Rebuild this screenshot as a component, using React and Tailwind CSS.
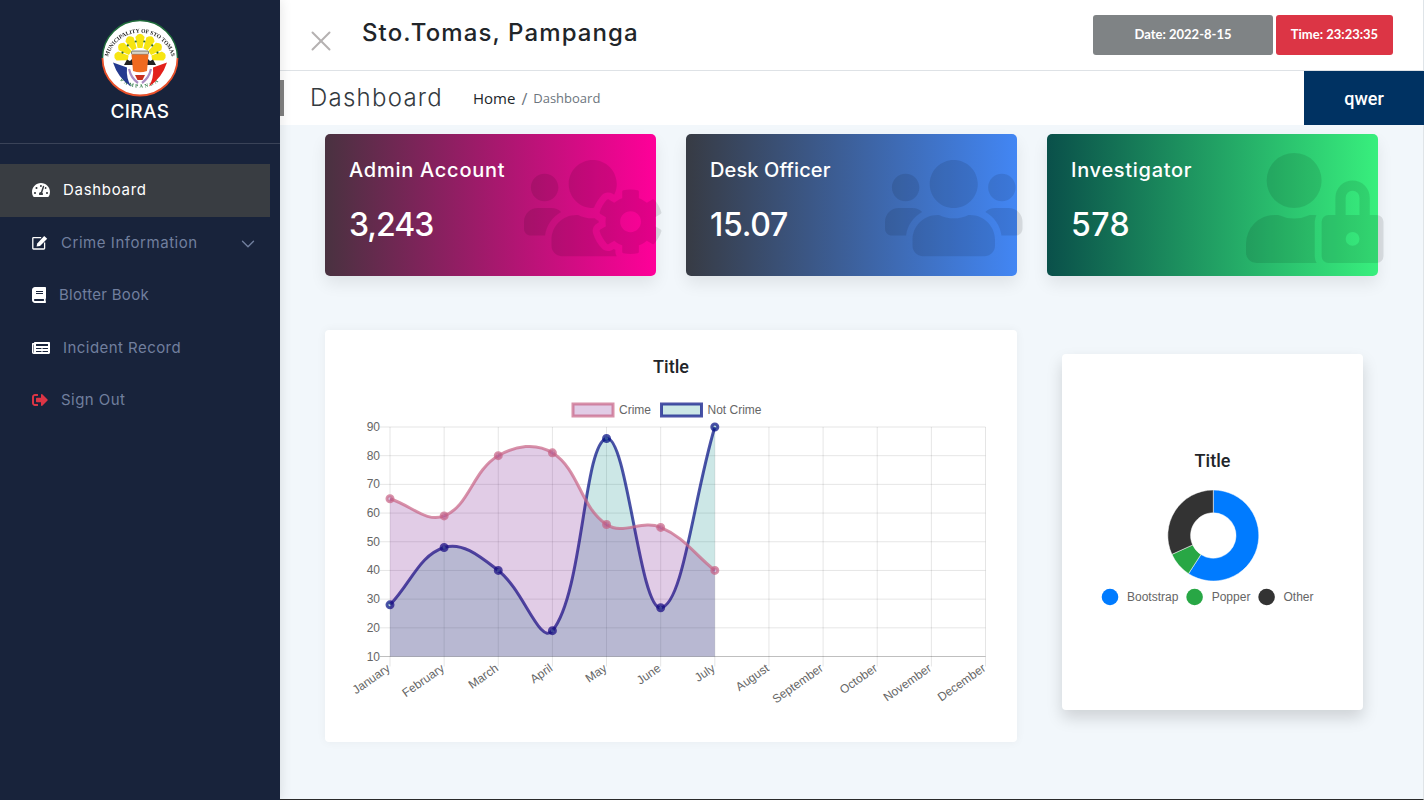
import { X, ChevronDown } from 'lucide-react'
import {
  FaTachometerAlt,
  FaBook,
  FaNewspaper,
  FaSignOutAlt,
  FaUsersCog,
  FaUsers,
  FaUserLock,
} from 'react-icons/fa'

// boxed pencil, heavier than the one in the icon packs
function EditIcon({ className }) {
  return (
    <svg viewBox="0 0 16 15" className={className} fill="currentColor">
      <path d="M12.6 7.6 V13.3 A.7 .7 0 0 1 11.9 14 H1.5 A.7 .7 0 0 1 .8 13.3 V3.3 A.7 .7 0 0 1 1.5 2.6 H9.2" fill="none" stroke="currentColor" strokeWidth="1.3" />
      <path d="M5.2 8.4 L12.2 .9 L15.2 3.7 L8 11 L4.6 11.6 Z" />
    </svg>
  )
}

const navItems = [
  { label: 'Dashboard', icon: FaTachometerAlt, iconClass: 'w-[18px] h-[16px] text-white', textClass: 'text-white tracking-[0.7px]', active: true },
  { label: 'Crime Information', icon: EditIcon, iconClass: 'w-[16px] h-[15px] text-white', textClass: 'tracking-[0.55px]', chevron: true },
  { label: 'Blotter Book', icon: FaBook, iconClass: 'w-[14px] h-[16px] text-white', textClass: 'tracking-[0.3px]' },
  { label: 'Incident Record', icon: FaNewspaper, iconClass: 'w-[18px] h-[16px] text-white', textClass: 'tracking-[0.45px]' },
  { label: 'Sign Out', icon: FaSignOutAlt, iconClass: 'w-[16px] h-[16px] text-[#dc3545]', textClass: 'tracking-[0.45px]' },
]

const statCards = [
  { title: 'Admin Account', value: '3,243', icon: FaUsersCog, gradient: 'from-[#493240] to-[#ff0099]', titleClass: 'tracking-[0.75px]', valueClass: 'tracking-[-1px]' },
  { title: 'Desk Officer', value: '15.07', icon: FaUsers, gradient: 'from-[#373b44] to-[#4286f4]', titleClass: 'tracking-[0.1px]', valueClass: 'tracking-[-0.3px]' },
  { title: 'Investigator', value: '578', icon: FaUserLock, gradient: 'from-[#0a504a] to-[#38ef7d]', titleClass: 'tracking-[0.7px]', valueClass: 'tracking-[0.4px]' },
]

const months = ['January', 'February', 'March', 'April', 'May', 'June', 'July', 'August', 'September', 'October', 'November', 'December']
const crime = [65, 59, 80, 81, 56, 55, 40]
const notCrime = [28, 48, 40, 19, 86, 27, 90]

// plot area, in page pixels
const left = 390
const right = 985.5
const top = 427
const bottom = 656.5
const stepX = (right - left) / 11
const xAt = (i) => left + i * stepX
const yAt = (v) => bottom - ((v - 10) / 80) * (bottom - top)

// same bezier smoothing as chart.js with tension 0.4
function splinePath(values) {
  const pts = values.map((v, i) => ({ x: xAt(i), y: yAt(v) }))
  const ctrl = pts.map((cur, i) => {
    const prev = pts[i - 1] || cur
    const next = pts[i + 1] || cur
    const d01 = Math.hypot(cur.x - prev.x, cur.y - prev.y)
    const d12 = Math.hypot(next.x - cur.x, next.y - cur.y)
    const total = d01 + d12 || 1
    const fa = (0.4 * d01) / total
    const fb = (0.4 * d12) / total
    return {
      px: cur.x - fa * (next.x - prev.x),
      py: Math.max(top, Math.min(bottom, cur.y - fa * (next.y - prev.y))),
      nx: cur.x + fb * (next.x - prev.x),
      ny: Math.max(top, Math.min(bottom, cur.y + fb * (next.y - prev.y))),
    }
  })
  let d = `M${pts[0].x} ${pts[0].y}`
  for (let i = 1; i < pts.length; i++) {
    d += ` C${ctrl[i - 1].nx} ${ctrl[i - 1].ny} ${ctrl[i].px} ${ctrl[i].py} ${pts[i].x} ${pts[i].y}`
  }
  return d
}

function Series({ values, fill, stroke }) {
  const line = splinePath(values)
  const area = `${line} L${xAt(values.length - 1)} ${bottom} L${left} ${bottom} Z`
  return (
    <g>
      <path d={area} fill={fill} />
      <path d={line} fill="none" stroke={stroke} strokeWidth="3" />
      {values.map((v, i) => (
        <circle key={i} cx={xAt(i)} cy={yAt(v)} r="3" fill={fill} stroke={stroke} strokeWidth="3" />
      ))}
    </g>
  )
}

function LineChart() {
  const ticks = [90, 80, 70, 60, 50, 40, 30, 20, 10]
  return (
    <svg viewBox="325 390 692 330" className="block w-[692px] h-[330px] font-['Liberation_Sans',sans-serif]">
      <rect x="573" y="404" width="40" height="12" fill="rgba(105,0,132,.2)" stroke="rgba(200,99,132,.7)" strokeWidth="3" />
      <text x="619" y="414" fontSize="12" fill="#666">Crime</text>
      <rect x="661.5" y="404" width="40" height="12" fill="rgba(0,137,132,.2)" stroke="rgba(0,10,130,.7)" strokeWidth="3" />
      <text x="707.5" y="414" fontSize="12" fill="#666">Not Crime</text>

      {ticks.map((t) => (
        <g key={t}>
          <line x1="380" x2={right} y1={yAt(t)} y2={yAt(t)} stroke={t === 10 ? 'rgba(0,0,0,.25)' : 'rgba(0,0,0,.1)'} />
          <text x="380" y={yAt(t) + 4} fontSize="12" fill="#666" textAnchor="end">{t}</text>
        </g>
      ))}
      {months.map((m, i) => (
        <g key={m}>
          <line x1={xAt(i)} x2={xAt(i)} y1={top} y2={bottom + 10} stroke="rgba(0,0,0,.1)" />
          <text
            fontSize="12"
            fill="#666"
            textAnchor="end"
            transform={`translate(${xAt(i) + 1} 670) rotate(-35)`}
          >
            {m}
          </text>
        </g>
      ))}

      <Series values={notCrime} fill="rgba(0,137,132,.2)" stroke="rgba(0,10,130,.7)" />
      <Series values={crime} fill="rgba(105,0,132,.2)" stroke="rgba(200,99,132,.7)" />
    </svg>
  )
}

function Donut() {
  const cx = 151.3
  const cy = 58.5
  const R = 45.5
  const r = 22.7
  const pt = (rad, deg) => {
    const a = (deg * Math.PI) / 180
    return `${cx + rad * Math.sin(a)} ${cy - rad * Math.cos(a)}`
  }
  const slice = (a, b) =>
    `M${pt(R, a)} A${R} ${R} 0 ${b - a > 180 ? 1 : 0} 1 ${pt(R, b)} L${pt(r, b)} A${r} ${r} 0 ${b - a > 180 ? 1 : 0} 0 ${pt(r, a)} Z`
  const legend = [
    { label: 'Bootstrap', cx: 48, tx: 65, color: '#007bff' },
    { label: 'Popper', cx: 132.6, tx: 149.7, color: '#28a745' },
    { label: 'Other', cx: 204.6, tx: 221.5, color: '#333333' },
  ]
  return (
    <svg viewBox="0 0 301 160" className="block w-[301px] h-[160px] font-['Liberation_Sans',sans-serif]">
      <path d={slice(0, 213)} fill="#007bff" stroke="#fff" strokeWidth="0.5" />
      <path d={slice(213, 245.5)} fill="#28a745" stroke="#fff" strokeWidth="0.5" />
      <path d={slice(245.5, 360)} fill="#333333" stroke="#fff" strokeWidth="0.5" />
      {legend.map((l) => (
        <g key={l.label}>
          <circle cx={l.cx} cy="120" r="8.3" fill={l.color} />
          <text x={l.tx} y="124" fontSize="12" fill="#666">{l.label}</text>
        </g>
      ))}
    </svg>
  )
}

function Crest() {
  const rays = [-80, -54, -27, 0, 27, 54, 80]
  return (
    <svg viewBox="0 0 80 80" className="w-[80px] h-[80px] blur-[0.35px]">
      <defs>
        <path id="crest-top" d="M7.2 44 A33 33 0 0 1 72.8 44" />
        <path id="crest-bottom" d="M12 52 A31 31 0 0 0 68 52" />
      </defs>
      <circle cx="40" cy="40" r="37.5" fill="#fff" />
      <path d="M2.5 40 A37.5 37.5 0 0 1 77.5 40" fill="none" stroke="#1f6b3a" strokeWidth="1.5" />
      <path d="M2.5 40 A37.5 37.5 0 0 0 77.5 40" fill="none" stroke="#e8502a" strokeWidth="1.8" />
      <text fontSize="5.6" fontFamily="'Liberation Serif', serif" fill="#222" fontWeight="700">
        <textPath href="#crest-top" startOffset="50%" textAnchor="middle">MUNICIPALITY OF STO TOMAS</textPath>
      </text>
      <text fontSize="5" fontFamily="'Liberation Serif', serif" fill="#2c7a45" fontWeight="700" letterSpacing="1.8">
        <textPath href="#crest-bottom" startOffset="50%" textAnchor="middle">PAMPANGA</textPath>
      </text>
      {rays.map((a) => (
        <g key={a} transform={`rotate(${a} 40 42)`}>
          <path d="M37.6 30 L35.4 19 Q40 12.5 44.6 19 L42.4 30 Z" fill="#f7e511" />
        </g>
      ))}
      {[-67, -40, -13, 13, 40, 67].map((a) => (
        <circle key={a} cx={40 + 19 * Math.sin((a * Math.PI) / 180)} cy={42 - 19 * Math.cos((a * Math.PI) / 180)} r="1.1" fill="#2f6b2c" />
      ))}
      <path d="M13 44.5 L27 49.5 Q26 60 31 68.5 Q18 60 13 44.5 Z" fill="#243a8f" />
      <path d="M67 44.5 L53 49.5 Q54 60 49 68.5 Q62 60 67 44.5 Z" fill="#e3201b" />
      <path d="M24 47 L27 41.5 L30 43 L32 41 L48 41 L50 43 L53 41.5 L56 47 Z" fill="#222" />
      <path d="M29 51 Q31 60 38 65 M51 51 Q49 60 42 65" fill="none" stroke="#a98cc2" strokeWidth="2.2" />
      <rect x="31.5" y="33" width="17" height="3.4" rx="1" fill="#d9d4c8" stroke="#333" strokeWidth="0.6" />
      <path d="M31.5 36.5 L48.5 36.5 L47 53 Q40 55.5 33 53 Z" fill="#ef6a1f" />
      <path d="M35 57 L45 57 L42.5 62 L37.5 62 Z" fill="#c9301e" />
    </svg>
  )
}

function Sidebar() {
  return (
    <aside className="w-[280px] shrink-0 bg-[#18233b] relative z-10 shadow-[0_0_12px_rgba(0,0,0,.12)] font-[Inter,sans-serif]">
      <div className="h-[144px] border-b border-white/15 flex flex-col items-center pt-[18px]">
        <Crest />
        <div className="text-white text-[19px] font-medium leading-[26px] mt-[1px] tracking-[0.4px]">CIRAS</div>
      </div>
      <nav className="pt-[20px]">
        {navItems.map((item) => {
          const Icon = item.icon
          return (
            <a
              key={item.label}
              className={`w-[270px] h-[52.5px] pl-[32px] pr-[11px] flex items-center gap-[13px] text-[15px] text-[#717f9e] ${
                item.active ? 'bg-[#393d42]' : ''
              }`}
            >
              <Icon className={`shrink-0 ${item.iconClass}`} />
              <span className={`flex-1 ${item.textClass}`}>{item.label}</span>
              {item.chevron && <ChevronDown size={22} strokeWidth={1.5} className="text-[#717f9e] mt-[2px]" />}
            </a>
          )
        })}
      </nav>
    </aside>
  )
}

function Header() {
  return (
    <header className="bg-white font-[Inter,sans-serif]">
      <div className="h-[71px] border-b border-[#dee2e6] flex items-center pl-[24px] pr-[30px]">
        <X size={34} strokeWidth={1.4} className="text-[#b5b1b1] mt-[12px]" />
        <h1 className="ml-[24px] mb-[5px] text-[24px] font-medium text-[#212529] tracking-[1.1px]">Sto.Tomas, Pampanga</h1>
        <div className="ml-auto flex gap-[3px] mb-[1px] font-[Lato,sans-serif] font-bold text-[13px] text-white">
          <div className="w-[180px] h-[40px] rounded-[3px] bg-[#7f8385] flex items-center justify-center">Date: 2022-8-15</div>
          <div className="w-[117px] h-[40px] rounded-[3px] bg-[#dc3545] flex items-center justify-center">Time: 23:23:35</div>
        </div>
      </div>
      <div className="h-[54px] flex items-center">
        <div className="w-[4px] h-[36px] bg-[#808080] mb-[1px]" />
        <h2 className="ml-[26px] text-[24px] font-light text-[#343a40] tracking-[1.25px]">Dashboard</h2>
        <div className="ml-[30px] mt-[1px] font-['Open_Sans',sans-serif] flex items-center">
          <span className="text-[#212529] text-[15px]">Home</span>
          <span className="mx-[6px] text-[#6c757d] text-[16px]">/</span>
          <span className="text-[#6c757d] text-[13px]">Dashboard</span>
        </div>
        <div className="ml-auto mr-[-1px] w-[120px] h-[54px] bg-[#003262] text-white text-[18px] font-medium font-[Roboto,sans-serif] flex items-center justify-center">
          qwer
        </div>
      </div>
    </header>
  )
}

function StatCard({ title, value, icon: Icon, gradient, titleClass, valueClass }) {
  return (
    <div className={`relative h-[142px] rounded-[5px] bg-linear-to-r/srgb ${gradient} text-white pl-[24px] pt-[21px] shadow-[0_8px_16px_rgba(0,0,0,.08)]`}>
      <div className={`text-[20px] font-medium leading-[30px] ${titleClass}`}>{title}</div>
      <div className={`mt-[20px] text-[32px] font-medium leading-[40px] ${valueClass}`}>{value}</div>
      <Icon className="absolute right-[-5.5px] top-[19px] w-[137.5px] h-[110px] text-black/10" />
    </div>
  )
}

export default function App() {
  return (
    <div className="flex h-[800px] overflow-hidden bg-[#f2f7fb]">
      <Sidebar />
      <main className="flex-1 min-w-0 border-b border-r border-b-[#2a2a2a] border-r-[#dfe4e8]">
        <Header />
        <div className="pl-[45px] pt-[9px] font-[Inter,sans-serif]">
          <div className="grid grid-cols-[331px_331px_331px] gap-x-[30px]">
            {statCards.map((c) => (
              <StatCard key={c.title} {...c} />
            ))}
          </div>
          <div className="flex items-start mt-[54px]">
            <section className="w-[692px] h-[412px] bg-white rounded-[4px] shadow-[0_0_10px_rgba(0,0,0,.05)]">
              <h3 className="h-[60px] pt-[23px] text-center text-[18px] leading-[27px] font-medium font-[Roboto,sans-serif] text-[#212529]">Title</h3>
              <LineChart />
            </section>
            <section className="w-[301px] h-[356px] ml-[45px] mt-[24px] bg-white rounded-[4px] shadow-[0_8px_16px_rgba(0,0,0,.15)] pt-[93px]">
              <h3 className="h-[30px] text-center text-[18px] leading-[27px] font-medium font-[Roboto,sans-serif] text-[#212529]">Title</h3>
              <Donut />
            </section>
          </div>
        </div>
      </main>
    </div>
  )
}
